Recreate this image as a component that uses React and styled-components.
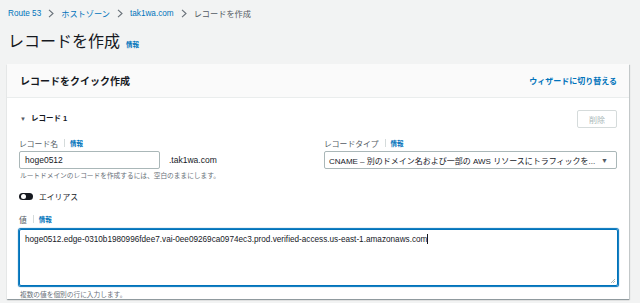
import React from "react";
import styled, { createGlobalStyle } from "styled-components";

const GlobalStyle = createGlobalStyle`
  html, body {
    margin: 0;
    padding: 0;
    background: #f2f3f3;
    font-family: "Liberation Sans", "Noto Sans CJK JP", sans-serif;
    color: #16191f;
  }
`;

const Page = styled.div`
  width: 640px;
  height: 303px;
  overflow: hidden;
  padding: 0 11px 0 7px;
  box-sizing: border-box;
`;

const Breadcrumbs = styled.nav`
  display: flex;
  align-items: center;
  gap: 7px;
  height: 26px;
  padding-left: 1px;
  font-size: 8.2px;
`;

const Crumb = styled.span`
  color: ${p => (p.current ? "#545b64" : "#0073bb")};
`;

const Chevron = () => (
  <svg width="6" height="9" viewBox="0 0 6 9">
    <path d="M1 0.8 L5 4.5 L1 8.2" fill="none" stroke="#687078" strokeWidth="1.1" />
  </svg>
);

const TitleRow = styled.div`
  display: flex;
  align-items: baseline;
  gap: 6px;
  padding: 6px 0 0 1px;
  box-sizing: border-box;
  height: 38px;
`;

const Title = styled.h1`
  margin: 0;
  font-size: 16px;
  font-weight: 400;
  line-height: 20px;
  color: #16191f;
`;

const Info = styled.a`
  color: #0073bb;
  font-size: 6.5px;
  font-weight: 700;
`;

const Card = styled.section`
  background: #fff;
  box-shadow: 0 1px 1px rgba(0, 28, 36, 0.3), 1px 1px 1px rgba(0, 28, 36, 0.15);
`;

const CardHeader = styled.header`
  display: flex;
  justify-content: space-between;
  align-items: center;
  height: 34px;
  box-sizing: border-box;
  padding: 0 12px 0 13px;
  background: #fafafa;
  border-bottom: 1px solid #eaeded;
`;

const CardTitle = styled.h2`
  margin: 0;
  font-size: 10px;
  font-weight: 700;
  color: #16191f;
`;

const HeaderLink = styled.a`
  color: #0073bb;
  font-size: 8px;
  font-weight: 700;
`;

const CardBody = styled.div`
  padding: 12px 12px 0 12px;
`;

const RecordHead = styled.div`
  display: flex;
  justify-content: space-between;
  align-items: center;
  height: 18px;
`;

const Expander = styled.span`
  font-size: 7.5px;
  font-weight: 700;
  color: #16191f;
  padding-left: 1px;
  margin-top: -3px;
  & > i {
    font-style: normal;
    font-size: 6px;
    color: #545b64;
    margin-right: 5px;
  }
`;

const DisabledButton = styled.button`
  width: 40px;
  height: 18px;
  box-sizing: border-box;
  border: 1px solid #d5dbdb;
  border-radius: 2px;
  background: #fff;
  color: #aab7b8;
  font-family: inherit;
  font-size: 8px;
  padding: 0;
`;

const FieldGrid = styled.div`
  display: grid;
  grid-template-columns: 305px 293px;
  margin-top: 10px;
`;

const Label = styled.div`
  display: flex;
  align-items: center;
  height: 10px;
  font-size: 7.8px;
  color: #545b64;
  margin-bottom: ${p => p.gap || 3}px;
  & > span.bar {
    width: 1px;
    height: 8px;
    background: #d5dbdb;
    margin: 0 5px 0 6px;
  }
`;

const InputRow = styled.div`
  display: flex;
  align-items: center;
  gap: 9px;
`;

const TextBox = styled.div`
  box-sizing: border-box;
  width: ${p => p.width || "100%"};
  height: 18px;
  border: 1px solid #aab7b8;
  border-radius: 2px;
  padding: 0 5px;
  display: flex;
  align-items: center;
  font-size: 8.5px;
  color: #16191f;
  white-space: nowrap;
  overflow: hidden;
`;

const Suffix = styled.span`
  font-size: 8.5px;
  color: #16191f;
`;

const Hint = styled.div`
  font-size: 6.7px;
  line-height: 9px;
  color: #687078;
  margin-top: ${p => p.top || 2}px;
  padding-left: 1px;
`;

const SelectBox = styled(TextBox)`
  justify-content: space-between;
  font-size: 8px;
  padding: 0 8px 0 4px;
  & > i {
    font-style: normal;
    font-size: 7px;
    color: #545b64;
  }
`;

const ToggleRow = styled.div`
  display: flex;
  align-items: center;
  gap: 6px;
  height: 10px;
  margin-top: 11px;
  font-size: 7.8px;
  color: #16191f;
`;

const Toggle = styled.span`
  position: relative;
  width: 14px;
  height: 7px;
  border-radius: 4px;
  background: #16191f;
  &::after {
    content: "";
    position: absolute;
    top: 1px;
    left: 1.5px;
    width: 5px;
    height: 5px;
    border-radius: 50%;
    background: #fff;
  }
`;

const ValueField = styled.div`
  margin-top: 13px;
`;

const TextArea = styled.div`
  box-sizing: border-box;
  width: 599px;
  height: 57px;
  border: 1px solid #0073bb;
  box-shadow: 0 0 1px 0.5px #0073bb;
  border-radius: 2px;
  padding: 4px 5px;
  font-size: 8.2px;
  color: #16191f;
  position: relative;
  & > .caret {
    display: inline-block;
    width: 1px;
    height: 10px;
    background: #16191f;
    vertical-align: -2px;
  }
  &::after {
    content: "";
    position: absolute;
    right: 2px;
    bottom: 2px;
    width: 4px;
    height: 4px;
    background: linear-gradient(135deg, transparent 45%, #aab7b8 50%, transparent 60%, transparent 70%, #aab7b8 75%, transparent 85%);
  }
`;

function FieldLabel({ children, gap }) {
  return (
    <Label gap={gap}>
      {children}
      <span className="bar" />
      <Info>情報</Info>
    </Label>
  );
}

export default function App() {
  return (
    <>
      <GlobalStyle />
      <Page>
        <Breadcrumbs>
          <Crumb>Route 53</Crumb>
          <Chevron />
          <Crumb>ホストゾーン</Crumb>
          <Chevron />
          <Crumb>tak1wa.com</Crumb>
          <Chevron />
          <Crumb current>レコードを作成</Crumb>
        </Breadcrumbs>
        <TitleRow>
          <Title>レコードを作成</Title>
          <Info>情報</Info>
        </TitleRow>
        <Card>
          <CardHeader>
            <CardTitle>レコードをクイック作成</CardTitle>
            <HeaderLink>ウィザードに切り替える</HeaderLink>
          </CardHeader>
          <CardBody>
            <RecordHead>
              <Expander><i>▼</i>レコード 1</Expander>
              <DisabledButton disabled>削除</DisabledButton>
            </RecordHead>
            <FieldGrid>
              <div>
                <FieldLabel>レコード名</FieldLabel>
                <InputRow>
                  <TextBox width="141px">hoge0512</TextBox>
                  <Suffix>.tak1wa.com</Suffix>
                </InputRow>
                <Hint>ルートドメインのレコードを作成するには、空白のままにします。</Hint>
              </div>
              <div>
                <FieldLabel>レコードタイプ</FieldLabel>
                <SelectBox>
                  <span>CNAME – 別のドメイン名および一部の AWS リソースにトラフィックを...</span>
                  <i>▼</i>
                </SelectBox>
              </div>
            </FieldGrid>
            <ToggleRow>
              <Toggle />
              エイリアス
            </ToggleRow>
            <ValueField>
              <FieldLabel gap={5}>値</FieldLabel>
              <TextArea>
                hoge0512.edge-0310b1980996fdee7.vai-0ee09269ca0974ec3.prod.verified-access.us-east-1.amazonaws.com
                <span className="caret" />
              </TextArea>
              <Hint top={4}>複数の値を個別の行に入力します。</Hint>
            </ValueField>
          </CardBody>
        </Card>
      </Page>
    </>
  );
}
